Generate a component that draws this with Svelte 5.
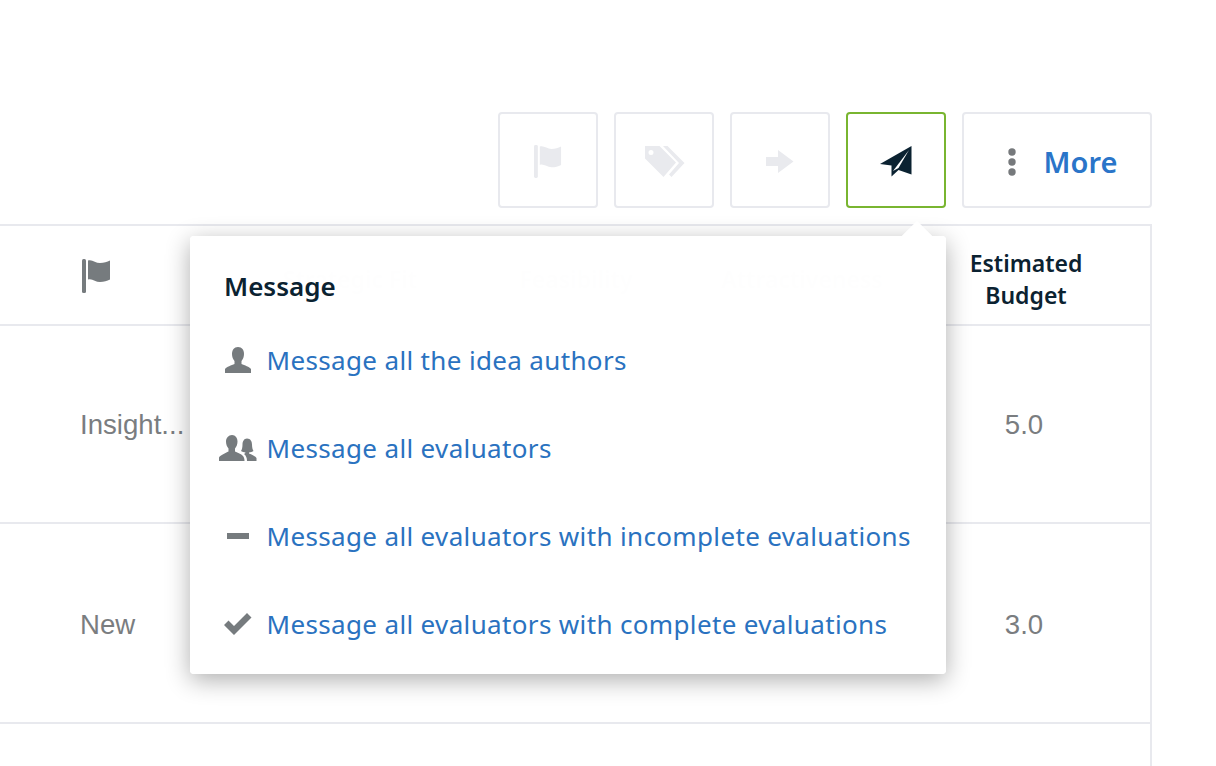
<script>
  const items = [
    { icon: 'user', label: 'Message all the idea authors' },
    { icon: 'users', label: 'Message all evaluators' },
    { icon: 'minus', label: 'Message all evaluators with incomplete evaluations' },
    { icon: 'check', label: 'Message all evaluators with complete evaluations' }
  ];
  const columns = ['Strategic Fit', 'Feasibility', 'Attractiveness'];
  const rows = [
    { status: 'Insight...', budget: '5.0' },
    { status: 'New', budget: '3.0' }
  ];
</script>

{#snippet flag(w, h)}
  <svg width={w} height={h} viewBox="0 0 30 34" fill="currentColor">
    <rect x="0" y="0" width="4" height="34" rx="1.5" />
    <path d="M6 1.5c4-1.5 7.500 2.500 12 2.500 4 0 7-1 10-2.500v19c-3 1.500-6 2.500-10 2.500-4.500 0-8-4-12-2.500z" />
  </svg>
{/snippet}

<div class="page">
  <div class="toolbar">
    <button class="tool disabled" aria-label="Flag">{@render flag(29, 33)}</button>
    <button class="tool disabled" aria-label="Tag">
      <svg width="41" height="33" viewBox="0 0 41 33" fill="currentColor">
        <path fill-rule="evenodd" d="M1 1h14.500L32 17.500 19.500 32 1 13.500zM7 5a2.500 2.500 0 1 0 0 5 2.500 2.500 0 0 0 0-5z" />
        <path d="M19 1h4.500L40.500 18 27.500 32l-2.500-2.500L35 18z" />
      </svg>
    </button>
    <button class="tool disabled" aria-label="Move">
      <svg width="28" height="23" viewBox="0 0 28 23" fill="currentColor">
        <path d="M0 7h12V0l15.500 11.500L12 23v-7H0z" />
      </svg>
    </button>
    <button class="tool active" aria-label="Send message">
      <svg width="32" height="31" viewBox="0 0 32 31" fill="currentColor">
        <path d="M31.500 0v28.500L18.500 24 11.500 30.500V19.500L0 18z" />
        <path class="slit" d="M13 25l5.500-3L29 4z" />
      </svg>
    </button>
    <button class="tool more">
      <svg width="10" height="28" viewBox="0 0 10 28" fill="currentColor">
        <circle cx="5" cy="4" r="3.700" />
        <circle cx="5" cy="14" r="3.700" />
        <circle cx="5" cy="24" r="3.700" />
      </svg>
      <span>More</span>
    </button>
  </div>

  <div class="table">
    <div class="row head">
      <div class="flag-cell">{@render flag(30, 34)}</div>
      {#each columns as col}
        <div class="col-cell">{col}</div>
      {/each}
      <div class="budget-cell">Estimated<br />Budget</div>
    </div>
    {#each rows as row}
      <div class="row body">
        <div class="status">{row.status}</div>
        <div class="budget-val">{row.budget}</div>
      </div>
    {/each}
    <div class="row tail"></div>
  </div>

  <div class="popover">
    <div class="arrow"></div>
    <h3>Message</h3>
    <ul>
      {#each items as item}
        <li>
          <span class="ico">
            {#if item.icon === 'user'}
              <svg width="28" height="26" viewBox="0 0 28 26" fill="currentColor">
                <path d="M14 0c4 0 6 3 6 7 0 3-1 5-2.500 7v3c3 1.500 8 2.500 9.500 5v4H1v-4c1.500-2.500 6.500-3.500 9.500-5v-3C9 12 8 10 8 7c0-4 2-7 6-7z" />
              </svg>
            {:else if item.icon === 'users'}
              <svg width="38" height="26" viewBox="0 0 38 26" fill="currentColor">
                <path d="M13 0c3.500 0 5.500 3 5.500 6.500 0 3-1 5-2.500 7v3c3 1.200 6 2.500 8 4.500 1 1.200 1.500 3 1.500 5H0v-3.500c1.500-2.500 6.500-4.500 9.500-6v-3c-1.500-2-2.500-4-2.500-7C7 3 9.500 0 13 0z" />
                <path d="M28 3.500c3.500 0 5 3 5 6 0 2.500.5 5 1.500 6.500-1 .8-3 1.300-4.500 1.500v1c3 1 6 2.500 7.500 4.500V26H28c0-3-1-5.500-3-7 1-.5 1.500-1 1.500-1.500-1.500-.2-3.500-.7-4.500-1.500 1-1.500 1.500-4 1.500-6.500 0-3 1.500-6 4.500-6z" />
              </svg>
            {:else if item.icon === 'minus'}
              <svg width="22" height="6" viewBox="0 0 22 6" fill="currentColor"><rect width="22" height="6" /></svg>
            {:else}
              <svg width="28" height="22" viewBox="0 0 28 22" fill="currentColor">
                <path d="M10 22 0 12l4.500-4.500L10 13 23 0l4.500 4.500z" />
              </svg>
            {/if}
          </span>
          <a href="#top">{item.label}</a>
        </li>
      {/each}
    </ul>
  </div>
</div>

<style>
  :global(body) {
    margin: 0;
    background: #fff;
    overflow: hidden;
  }
  .page {
    position: relative;
    width: 1216px;
    height: 766px;
    overflow: hidden;
    box-sizing: border-box;
    padding: 112px 64px 0 0;
    font-family: "Noto Sans", "Liberation Sans", sans-serif;
  }
  .toolbar {
    display: flex;
    justify-content: flex-end;
    gap: 16px;
    margin-bottom: 16px;
  }
  .tool {
    width: 100px;
    height: 96px;
    box-sizing: border-box;
    display: flex;
    align-items: center;
    justify-content: center;
    padding: 3px 0 0;
    background: #fff;
    border: 2px solid #e8e9ee;
    border-radius: 4px;
    font: inherit;
  }
  .disabled {
    color: #e9eaee;
  }
  .active {
    border-color: #79b530;
    color: #0b2231;
  }
  .slit {
    fill: #fff;
  }
  .more {
    width: 190px;
    gap: 27px;
    padding-left: 10px;
    color: #76797c;
  }
  .more span {
    color: #2a75c9;
    font-size: 29px;
    font-weight: 600;
    line-height: 1;
  }
  .table {
    border-top: 2px solid #e8e9ee;
    border-right: 2px solid #e8e9ee;
  }
  .row {
    display: flex;
    align-items: center;
    justify-content: space-between;
    box-sizing: border-box;
    border-bottom: 2px solid #e8e9ee;
    padding-left: 80px;
  }
  .head {
    height: 100px;
    padding-right: 13px;
    justify-content: flex-start;
    color: #0b2231;
    font-size: 23px;
    font-weight: 600;
    line-height: 32px;
  }
  .body {
    height: 198px;
    padding-top: 2px;
    font-family: "Liberation Sans", sans-serif;
    font-size: 27.600px;
    color: #7a7d80;
  }
  .body + .body {
    height: 200px;
    padding-top: 4px;
  }
  .tail {
    border-bottom: 0;
    height: 60px;
  }
  .flag-cell {
    display: flex;
    flex: none;
    width: 157px;
    color: #767b7e;
    margin-top: 1px;
    padding-left: 2px;
    box-sizing: border-box;
  }
  .col-cell {
    flex: none;
    width: 226px;
    text-align: center;
    margin-top: 8px;
  }
  .budget-cell {
    width: 222px;
    text-align: center;
    margin-top: 8px;
  }
  .budget-val {
    width: 252px;
    text-align: center;
  }
  .popover {
    position: absolute;
    left: 190px;
    top: 236px;
    width: 756px;
    height: 438px;
    box-sizing: border-box;
    padding: 33px 0 0 35px;
    background: rgba(255, 255, 255, 0.995);
    border-radius: 4px;
    box-shadow: 0 6px 24px rgba(0, 0, 0, 0.32);
  }
  .arrow {
    position: absolute;
    top: -11px;
    right: 18px;
    width: 22px;
    height: 22px;
    background: #fff;
    transform: rotate(45deg);
    clip-path: polygon(0 0, 100% 0, 0 100%);
  }
  h3 {
    margin: 0;
    margin-left: -1px;
    color: #0b2231;
    font-size: 26px;
    font-weight: 600;
    line-height: 34px;
  }
  ul {
    list-style: none;
    margin: 13px 0 0;
    padding: 0;
  }
  li {
    display: flex;
    align-items: center;
    height: 88px;
    position: relative;
    padding-left: 41.500px;
  }
  .ico {
    position: absolute;
    left: 13px;
    top: 50%;
    transform: translate(-50%, -50%);
    display: flex;
    color: #767b7e;
  }
  a {
    color: #2a72c0;
    font-size: 26px;
    line-height: 34px;
    letter-spacing: 0.35px;
    text-decoration: none;
    white-space: nowrap;
  }
</style>
